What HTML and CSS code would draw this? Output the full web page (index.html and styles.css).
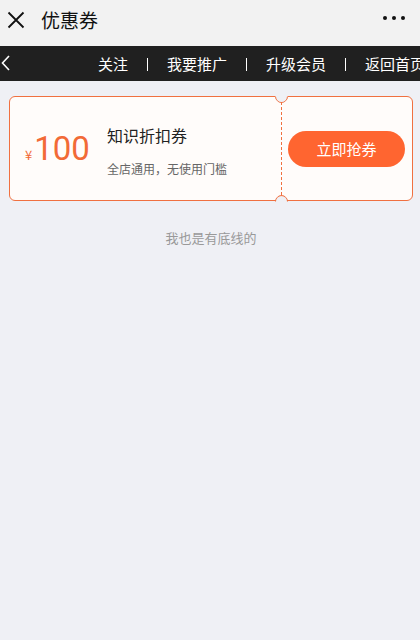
FILE: index.html
```html
<!DOCTYPE html>
<html lang="zh">
<head>
<meta charset="utf-8">
<title>优惠券</title>
<link rel="stylesheet" href="styles.css">
</head>
<body>
<header class="topbar">
  <svg class="close" width="18" height="18" viewBox="0 0 18 18"><path d="M1.5 1.5 L16.5 16.5 M16.5 1.5 L1.5 16.5" stroke="#111" stroke-width="1.8" fill="none"/></svg>
  <h1 class="title">优惠券</h1>
  <div class="dots"><span></span><span></span><span></span></div>
</header>
<nav class="navbar">
  <svg class="back" width="9" height="16" viewBox="0 0 9 16"><path d="M8 1 L1.5 8 L8 15" stroke="#fff" stroke-width="1.6" fill="none"/></svg>
  <div class="links">
    <span class="link">关注</span><i class="sep"></i>
    <span class="link">我要推广</span><i class="sep"></i>
    <span class="link">升级会员</span><i class="sep"></i>
    <span class="link">返回首页</span>
  </div>
</nav>
<main class="page">
  <div class="coupon">
    <div class="coupon-main">
      <div class="amount"><span class="yen">¥</span><span class="num">100</span></div>
      <div class="info">
        <div class="name">知识折扣券</div>
        <div class="desc">全店通用，无使用门槛</div>
      </div>
    </div>
    <div class="coupon-side">
      <button class="grab">立即抢券</button>
    </div>
    <span class="notch notch-top"></span>
    <span class="notch notch-bottom"></span>
  </div>
  <p class="end">我也是有底线的</p>
</main>
</body>
</html>
```
FILE: styles.css
```css
* { box-sizing: border-box; }
html, body { margin: 0; padding: 0; }
body {
  width: 420px;
  height: 640px;
  background: #eff0f5;
  font-family: "Noto Sans CJK SC", "Noto Sans", sans-serif;
  overflow: hidden;
}
.topbar {
  height: 46px;
  background: #f2f2f2;
  display: flex;
  align-items: center;
  padding: 0 15px 7px 7px;
}
.close { display: block; }
.title {
  margin: 0 0 0 16px;
  font-size: 19px;
  font-weight: 400;
  color: #111;
  line-height: 26px;
}
.dots {
  margin-left: auto;
  display: flex;
  gap: 5px;
  margin-top: -3px;
}
.dots span {
  width: 4px;
  height: 4px;
  border-radius: 50%;
  background: #111;
}
.navbar {
  height: 35px;
  background: #202020;
  display: flex;
  align-items: center;
  padding-left: 1px;
  overflow: hidden;
  white-space: nowrap;
}
.back { display: block; flex: none; margin-top: -2px; }
.links {
  display: flex;
  align-items: center;
  margin-left: 88px;
  flex: none;
}
.link {
  color: #fff;
  font-size: 15px;
  line-height: 20px;
}
.sep {
  width: 1px;
  height: 13px;
  background: #fff;
  margin: 2px 19px 0;
}
.page {
  padding: 15px 7px 0 9px;
}
.coupon {
  position: relative;
  height: 105px;
  border: 1px solid #f07040;
  border-radius: 6px;
  background: #fffcfa;
  display: flex;
}
.coupon-main {
  width: 271px;
  display: flex;
  align-items: flex-start;
  padding: 27px 0 0 15px;
}
.amount {
  width: 82px;
  display: flex;
  align-items: baseline;
  color: #f26a36;
  margin-top: 9px;
}
.yen {
  font-size: 13px;
  margin-right: 2px;
  font-family: "Noto Sans CJK SC", sans-serif;
}
.num {
  font-family: Roboto, "Noto Sans", sans-serif;
  font-size: 33px;
  line-height: 32px;
}
.info { display: flex; flex-direction: column; }
.name {
  font-size: 16px;
  line-height: 22px;
  color: #222;
}
.desc {
  margin-top: 14px;
  font-size: 12px;
  line-height: 17px;
  color: #666;
}
.coupon-side {
  flex: 1;
  border-left: 1px dashed #f07040;
  display: flex;
  align-items: center;
  padding: 0 7px 0 6px;
}
.grab {
  width: 100%;
  height: 36px;
  border: none;
  border-radius: 18px;
  background: #ff6530;
  color: #fff;
  font-family: "Noto Sans CJK SC", sans-serif;
  font-size: 15px;
  padding: 0;
}
.notch {
  position: absolute;
  left: 265px;
  width: 13px;
  height: 13px;
  border-radius: 50%;
  background: #eff0f5;
  border: 1px solid;
  transform: rotate(-45deg);
}
.notch-top {
  top: -7.5px;
  border-color: transparent transparent #f07040 #f07040;
}
.notch-bottom {
  bottom: -7.5px;
  border-color: #f07040 #f07040 transparent transparent;
}
.end {
  margin: 28px 0 0;
  text-align: center;
  font-size: 13px;
  line-height: 18px;
  color: #999;
}
```
